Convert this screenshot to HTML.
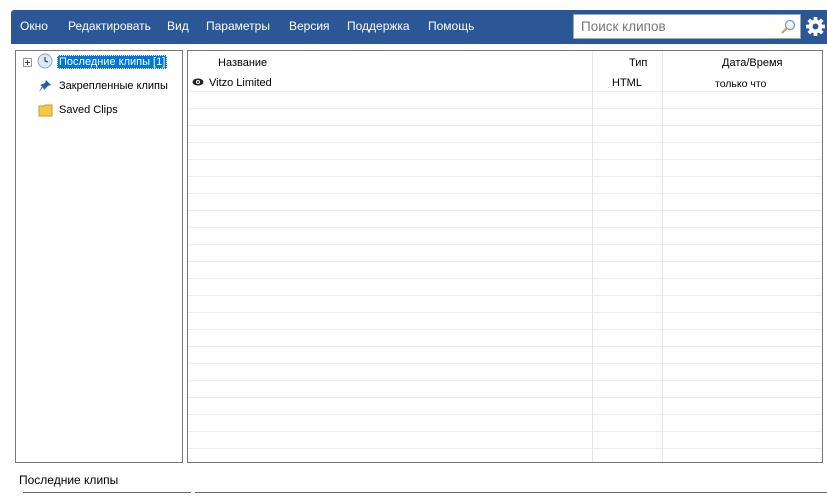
<!DOCTYPE html><html><head><meta charset="utf-8"><style>
body{margin:0;width:827px;height:500px;background:#fff;font-family:"Liberation Sans",sans-serif;font-size:11px;position:relative;overflow:hidden;color:#000}
.bar{position:absolute;left:11px;top:10px;width:816px;height:34px;background:#2b5797;border-radius:3px 0 0 0}
.m{position:absolute;top:19px;color:#fff;font-size:12px}
.search{position:absolute;left:573px;top:14px;width:228px;height:25px;background:#fff;border:1px solid #9aa;box-sizing:border-box}
.search span{position:absolute;left:7px;top:4px;color:#777;font-size:13.5px}
.lp{position:absolute;left:15px;top:50px;width:168px;height:413px;border:1px solid #777;box-sizing:border-box}
.rp{position:absolute;left:187px;top:50px;width:636px;height:413px;border:1px solid #777;box-sizing:border-box;
background:repeating-linear-gradient(to bottom,#fff 0,#fff 16px,#ececec 16px,#ececec 17px);background-position:0 24px;background-size:100% 17px}
.rp .cover{position:absolute;left:0;top:0;width:100%;height:40px;background:#fff}
.vl{position:absolute;top:0;bottom:0;width:1px;background:#e6e6e6}
.t{position:absolute;white-space:nowrap}
</style></head><body>
<div class="bar"></div>
<div class="m" style="left:20px">Окно</div>
<div class="m" style="left:68px">Редактировать</div>
<div class="m" style="left:167px">Вид</div>
<div class="m" style="left:206px">Параметры</div>
<div class="m" style="left:289px">Версия</div>
<div class="m" style="left:347px">Поддержка</div>
<div class="m" style="left:428px">Помощь</div>
<div class="search"><span>Поиск клипов</span>
<svg style="position:absolute;right:4px;top:4px" width="16" height="16" viewBox="0 0 16 16"><circle cx="10" cy="6" r="4.5" fill="#eef6fb" stroke="#7a9bb5" stroke-width="1.3"/><line x1="6.5" y1="9.5" x2="2" y2="14" stroke="#c9a25a" stroke-width="2.2"/></svg></div>
<svg style="position:absolute;left:805px;top:16px" width="21" height="21" viewBox="0 0 20 20"><g fill="#fff"><circle cx="10" cy="10" r="6.5"/><g stroke="#fff" stroke-width="3.6"><line x1="10" y1="1" x2="10" y2="19"/><line x1="1" y1="10" x2="19" y2="10"/><line x1="3.6" y1="3.6" x2="16.4" y2="16.4"/><line x1="16.4" y1="3.6" x2="3.6" y2="16.4"/></g></g><circle cx="10" cy="10" r="2.8" fill="#2b5797"/></svg>
<div class="lp">
<div class="t" style="left:7px;top:7px;width:7px;height:7px;border:1px solid #999"></div>
<div class="t" style="left:9px;top:11px;width:5px;height:1px;background:#444"></div>
<div class="t" style="left:11px;top:9px;width:1px;height:5px;background:#444"></div>
<svg class="t" style="left:21px;top:2px" width="16" height="16"><circle cx="8" cy="8" r="7" fill="#dfe7f3" stroke="#8aa" /><path d="M8 4V8L11 9" stroke="#346" fill="none" stroke-width="1.2"/></svg>
<div class="t" style="left:41px;top:4px;background:#0078d7;color:#fff;padding:1px 2px;outline:1px dotted #fff;outline-offset:-1px">Последние клипы [1]</div>
<svg class="t" style="left:21px;top:27px" width="16" height="16"><path d="M9 2L14 7L11 8L7 12L6 9L2 14L5 8L3 7L8 5Z" fill="#1f5fbf"/></svg>
<div class="t" style="left:43px;top:29px">Закрепленные клипы</div>
<svg class="t" style="left:22px;top:51px" width="16" height="16"><path d="M1 4H6L7 3H14V14H1Z" fill="#f3c84b" stroke="#c99a25"/></svg>
<div class="t" style="left:43px;top:53px">Saved Clips</div>
</div>
<div class="rp"><div class="cover"></div>
<div class="vl" style="left:404px"></div><div class="vl" style="left:474px"></div>
<div class="t" style="left:30px;top:6px">Название</div>
<div class="t" style="left:441px;top:6px">Тип</div>
<div class="t" style="left:534px;top:6px">Дата/Время</div>
<svg class="t" style="left:4px;top:27px" width="12" height="8"><ellipse cx="6" cy="4" rx="5.5" ry="3.5" fill="#222"/><circle cx="6" cy="4" r="2" fill="#fff"/><circle cx="6" cy="4" r="1" fill="#222"/></svg>
<div class="t" style="left:21px;top:26px">Vitzo Limited</div>
<div class="t" style="left:424px;top:26px">HTML</div>
<div class="t" style="left:527px;top:27px;font-size:10.5px">только что</div>
</div>
<div class="t" style="left:19px;top:473px;font-size:12px">Последние клипы</div>
<div class="t" style="left:23px;top:492px;width:168px;height:1px;background:#666"></div>
<div class="t" style="left:195px;top:492px;width:632px;height:1px;background:#666"></div>
</body></html>
